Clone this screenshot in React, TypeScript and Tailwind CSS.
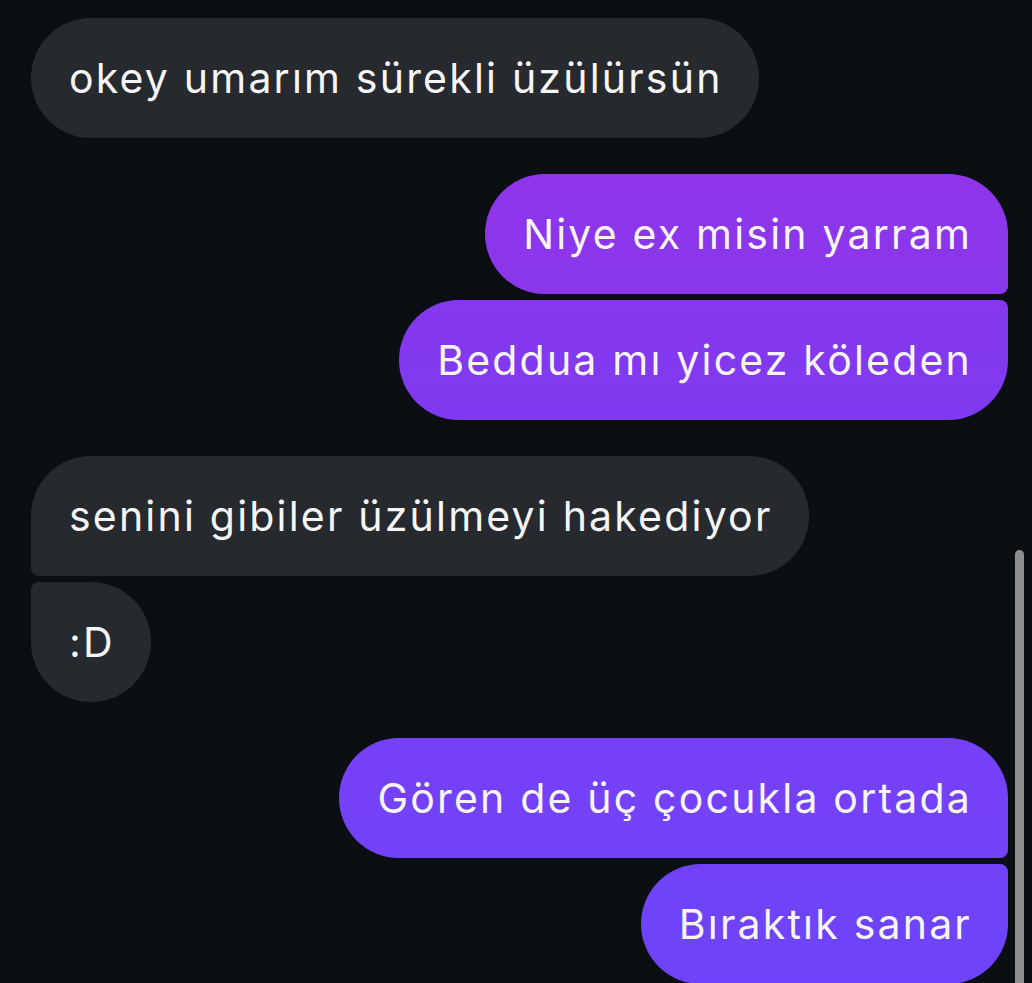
import React from "react";

type Msg = { text: string; me: boolean; cls: string };

const font = { fontFamily: "Inter, 'Noto Sans', sans-serif" };

function Bubble({ text, me, cls }: Msg) {
  return (
    <div className={me ? "flex justify-end" : "flex justify-start"}>
      <div
        className={
          "h-[120px] pl-[38px] pr-[36px] flex items-center text-[41px] leading-[48px] text-[#f5f5f7] tracking-[2.2px] whitespace-nowrap " +
          cls
        }
        style={font}
      >
        {text}
      </div>
    </div>
  );
}

export default function App() {
  return (
    <div className="relative w-[1032px] h-[983px] overflow-hidden bg-[#0b0f13]">
      <div className="flex flex-col pl-[31px] pr-[24px] pt-[18px] gap-[36px]">
        <div className="flex flex-col gap-[6px]">
          <Bubble
            text="okey umarım sürekli üzülürsün"
            me={false}
            cls="bg-[#26292e] rounded-[60px]"
          />
        </div>
        <div className="flex flex-col gap-[6px]">
          <Bubble
            text="Niye ex misin yarram"
            me={true}
            cls="bg-gradient-to-b from-[#8e35eb] to-[#8a37ec] rounded-[60px] rounded-br-[8px]"
          />
          <Bubble
            text="Beddua mı yicez köleden"
            me={true}
            cls="bg-gradient-to-b from-[#8538ee] to-[#8039f0] rounded-[60px] rounded-tr-[8px]"
          />
        </div>
        <div className="flex flex-col gap-[6px]">
          <Bubble
            text="senini gibiler üzülmeyi hakediyor"
            me={false}
            cls="bg-[#26292e] rounded-[60px] rounded-bl-[8px]"
          />
          <Bubble
            text=":D"
            me={false}
            cls="bg-[#26292e] rounded-[60px] rounded-tl-[8px]"
          />
        </div>
        <div className="flex flex-col gap-[6px]">
          <Bubble
            text="Gören de üç çocukla ortada"
            me={true}
            cls="bg-gradient-to-b from-[#7640f7] to-[#7242f9] rounded-[60px] rounded-br-[8px]"
          />
          <Bubble
            text="Bıraktık sanar"
            me={true}
            cls="bg-gradient-to-b from-[#7142f9] to-[#6d44fb] rounded-[60px] rounded-tr-[8px]"
          />
        </div>
      </div>
      <div className="absolute left-[1015px] top-[550px] w-[9px] h-[440px] rounded-t-full bg-[#8e8e8e]" />
    </div>
  );
}
